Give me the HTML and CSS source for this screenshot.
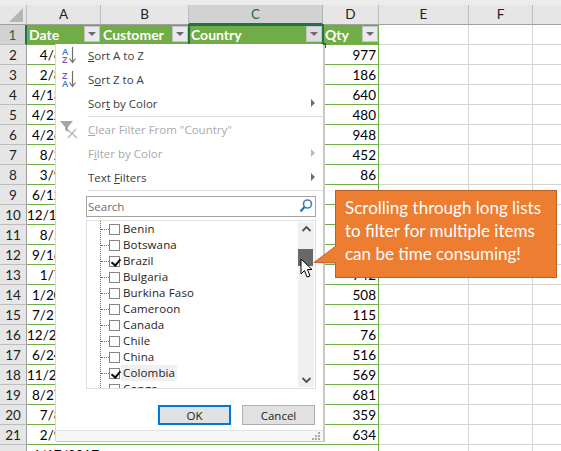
FILE: index.html
```html
<!DOCTYPE html>
<html lang="en">
<head>
<meta charset="utf-8">
<title>Filter list</title>
<link rel="stylesheet" href="styles.css">
</head>
<body>
<div class="app">
  <div class="topstrip"></div>
  <div class="sheet">
    <div class="corner"><svg width="27" height="19" viewBox="0 0 27 19"><path d="M23 3V17H9Z" fill="#b5b5b5"/></svg></div>
    <div class="ch">A</div><div class="ch">B</div><div class="ch sel">C</div><div class="ch">D</div><div class="ch">E</div><div class="ch">F</div><div class="ch end"></div>

    <div class="rh sel">1</div>
    <div class="th">Date<span class="fb"></span></div>
    <div class="th">Customer<span class="fb"></span></div>
    <div class="th active">Country<span class="fb"></span><i class="handle"></i></div>
    <div class="th">Qty<span class="fb"></span></div>
    <div class="c"></div><div class="c"></div><div class="c end"></div>

    <div class="rh">2</div><div class="d">4/6/2017</div><div class="d"></div><div class="d"></div><div class="d n">977</div><div class="c"></div><div class="c"></div><div class="c end"></div>
    <div class="rh">3</div><div class="d">2/8/2017</div><div class="d"></div><div class="d"></div><div class="d n">186</div><div class="c"></div><div class="c"></div><div class="c end"></div>
    <div class="rh">4</div><div class="d">4/13/2017</div><div class="d"></div><div class="d"></div><div class="d n">640</div><div class="c"></div><div class="c"></div><div class="c end"></div>
    <div class="rh">5</div><div class="d">4/22/2017</div><div class="d"></div><div class="d"></div><div class="d n">480</div><div class="c"></div><div class="c"></div><div class="c end"></div>
    <div class="rh">6</div><div class="d">4/26/2017</div><div class="d"></div><div class="d"></div><div class="d n">948</div><div class="c"></div><div class="c"></div><div class="c end"></div>
    <div class="rh">7</div><div class="d">8/2/2017</div><div class="d"></div><div class="d"></div><div class="d n">452</div><div class="c"></div><div class="c"></div><div class="c end"></div>
    <div class="rh">8</div><div class="d">3/9/2017</div><div class="d"></div><div class="d"></div><div class="d n">86</div><div class="c"></div><div class="c"></div><div class="c end"></div>
    <div class="rh">9</div><div class="d">6/12/2017</div><div class="d"></div><div class="d"></div><div class="d n"></div><div class="c"></div><div class="c"></div><div class="c end"></div>
    <div class="rh">10</div><div class="d">12/14/2017</div><div class="d"></div><div class="d"></div><div class="d n"></div><div class="c"></div><div class="c"></div><div class="c end"></div>
    <div class="rh">11</div><div class="d">8/5/2017</div><div class="d"></div><div class="d"></div><div class="d n"></div><div class="c"></div><div class="c"></div><div class="c end"></div>
    <div class="rh">12</div><div class="d">9/16/2017</div><div class="d"></div><div class="d"></div><div class="d n"></div><div class="c"></div><div class="c"></div><div class="c end"></div>
    <div class="rh">13</div><div class="d">1/7/2017</div><div class="d"></div><div class="d"></div><div class="d n">742</div><div class="c"></div><div class="c"></div><div class="c end"></div>
    <div class="rh">14</div><div class="d">1/20/2017</div><div class="d"></div><div class="d"></div><div class="d n">508</div><div class="c"></div><div class="c"></div><div class="c end"></div>
    <div class="rh">15</div><div class="d">7/21/2017</div><div class="d"></div><div class="d"></div><div class="d n">115</div><div class="c"></div><div class="c"></div><div class="c end"></div>
    <div class="rh">16</div><div class="d">12/23/2017</div><div class="d"></div><div class="d"></div><div class="d n">76</div><div class="c"></div><div class="c"></div><div class="c end"></div>
    <div class="rh">17</div><div class="d">6/24/2017</div><div class="d"></div><div class="d"></div><div class="d n">516</div><div class="c"></div><div class="c"></div><div class="c end"></div>
    <div class="rh">18</div><div class="d">11/25/2017</div><div class="d"></div><div class="d"></div><div class="d n">569</div><div class="c"></div><div class="c"></div><div class="c end"></div>
    <div class="rh">19</div><div class="d">8/27/2017</div><div class="d"></div><div class="d"></div><div class="d n">681</div><div class="c"></div><div class="c"></div><div class="c end"></div>
    <div class="rh">20</div><div class="d">7/8/2017</div><div class="d"></div><div class="d"></div><div class="d n">359</div><div class="c"></div><div class="c"></div><div class="c end"></div>
    <div class="rh">21</div><div class="d">2/9/2017</div><div class="d"></div><div class="d"></div><div class="d n">634</div><div class="c"></div><div class="c"></div><div class="c end"></div>
    <div class="rh"></div><div class="d">4/17/2017</div><div class="d"></div><div class="d"></div><div class="d n"></div><div class="c"></div><div class="c"></div><div class="c end"></div>
  </div>

  <div class="menu">
    <div class="item"><svg class="ico" width="24" height="20" viewBox="0 0 24 20"><text x="5" y="10" class="lt blue">A</text><text x="5" y="17.500" class="lt purple">Z</text><path d="M15.500 2V17M12.500 13.500L15.500 17.500L18.500 13.500" fill="none" stroke="#6d6d6d" stroke-width="1.200"/></svg><span><u>S</u>ort A to Z</span></div>
    <div class="item"><svg class="ico" width="24" height="20" viewBox="0 0 24 20"><text x="5" y="10" class="lt purple">Z</text><text x="5" y="17.500" class="lt blue">A</text><path d="M15.500 2V17M12.500 13.500L15.500 17.500L18.500 13.500" fill="none" stroke="#6d6d6d" stroke-width="1.200"/></svg><span>S<u>o</u>rt Z to A</span></div>
    <div class="item"><span class="noico">Sor<u>t</u> by Color</span><i class="arrow"></i></div>
    <div class="sep"></div>
    <div class="item off"><svg class="ico" width="24" height="20" viewBox="0 0 24 20"><path d="M3 2H16L11 8V13L8 11V8Z" fill="#a6a6a6"/><path d="M10 10L20 19M19 10L11 19" stroke="#b8b8b8" stroke-width="1.400"/></svg><span><u>C</u>lear Filter From "Country"</span></div>
    <div class="item off"><span class="noico">F<u>i</u>lter by Color</span><i class="arrow"></i></div>
    <div class="item"><span class="noico">Text <u>F</u>ilters</span><i class="arrow"></i></div>
    <div class="sep"></div>
    <div class="search"><span>Search</span><svg width="16" height="16" viewBox="0 0 16 16"><circle cx="9.500" cy="6" r="4" fill="none" stroke="#3f7fbf" stroke-width="1.600"/><path d="M6.500 9L2.500 13.500" stroke="#2a6fb0" stroke-width="2.200"/></svg></div>
    <div class="list">
      <div class="tree">
        <div class="li"><i class="cb"></i><span>Benin</span></div>
        <div class="li"><i class="cb"></i><span>Botswana</span></div>
        <div class="li"><i class="cb on"></i><span>Brazil</span></div>
        <div class="li"><i class="cb"></i><span>Bulgaria</span></div>
        <div class="li"><i class="cb"></i><span>Burkina Faso</span></div>
        <div class="li"><i class="cb"></i><span>Cameroon</span></div>
        <div class="li"><i class="cb"></i><span>Canada</span></div>
        <div class="li"><i class="cb"></i><span>Chile</span></div>
        <div class="li"><i class="cb"></i><span>China</span></div>
        <div class="li"><i class="cb on"></i><span class="hl">Colombia</span></div>
        <div class="li"><i class="cb"></i><span>Congo</span></div>
      </div>
      <div class="scroll">
        <svg width="15" height="14" viewBox="0 0 15 14"><path d="M3.500 9L7.500 5L11.500 9" fill="none" stroke="#505050" stroke-width="1.800"/></svg>
        <div class="thumb"></div>
        <svg width="15" height="14" viewBox="0 0 15 14"><path d="M3.500 5L7.500 9L11.500 5" fill="none" stroke="#505050" stroke-width="1.800"/></svg>
      </div>
    </div>
    <div class="btns"><button class="btn ok">OK</button><button class="btn">Cancel</button></div>
    <div class="grip"><svg width="10" height="10" viewBox="0 0 10 10"><path d="M7 1h2v2H7zM4 4h2v2H4zM7 4h2v2H7zM1 7h2v2H1zM4 7h2v2H4zM7 7h2v2H7z" fill="#a8a8a8"/></svg></div>
  </div>

  <div class="callout">
    <svg class="tail" width="24" height="20" viewBox="0 0 24 20"><path d="M23 1L1 17.500L23 18Z" fill="#ed7d31"/><path d="M23 1L1 17.500L23 18" fill="none" stroke="#b8622a"/></svg>
    <p>Scrolling through long lists<br>to filter for multiple items<br>can be time consuming!</p>
  </div>
  <svg class="cursor" width="13" height="21" viewBox="0 0 13 21"><path d="M1 1V16L4.500 12.500L7 19L10 18L7.500 11.500H12Z" fill="#fff" stroke="#000" stroke-width="1"/></svg>
</div>
</body>
</html>
```
FILE: styles.css
```css
* { box-sizing: border-box; }
html, body { margin: 0; padding: 0; }
body { width: 561px; height: 451px; overflow: hidden; background: #fff; }
.app { position: relative; width: 561px; height: 451px; overflow: hidden; font-family: "Lato", "Liberation Sans", sans-serif; }
.topstrip { height: 5px; background: #ececec; }
.sheet {
  display: grid;
  grid-template-columns: 27px 74px 88px 134px 56px 90px 64px 28px;
  grid-template-rows: 20px repeat(22, 20px);
  font-size: 13.500px;
  color: #000;
}
.corner { background: #e6e6e6; border-right: 1px solid #bdbdbd; border-bottom: 1px solid #a0a0a0; }
.corner svg { display: block; }
.ch { background: #e6e6e6; border-right: 1px solid #bdbdbd; border-bottom: 1px solid #a0a0a0; display: flex; align-items: center; justify-content: center; color: #222; line-height: 19px; }
.ch.sel { background: #d2d2d2; color: #1f6b43; border-bottom: 2px solid #217346; border-right-color: #b0b0b0; }
.ch.end { border-right: 0; }
.rh { background: #e6e6e6; border-right: 1px solid #9f9f9f; border-bottom: 1px solid #bdbdbd; display: flex; align-items: center; justify-content: center; color: #222; }
.rh.sel { background: #d2d2d2; color: #1f6b43; border-right: 2px solid #217346; }
.th { position: relative; background: #70ad47; color: #fff; font-weight: 700; padding-left: 2px; display: flex; align-items: center; border-bottom: 1px solid #70ad47; font-size: 14px; }
.fb { position: absolute; right: 1px; top: 1px; width: 16px; height: 16px; background: #e9e9f0; border: 1px solid #c4c4c4; }
.fb::after { content: ""; position: absolute; left: 3px; top: 5px; border: 4px solid transparent; border-top: 4px solid #6b6b6b; border-bottom: 0; }
.th.active { outline: 2px solid #217346; outline-offset: -1px; z-index: 1; }
.th.active .fb { background: #dcdce2; }
.handle { position: absolute; right: -3px; bottom: -4px; width: 5px; height: 5px; background: #217346; }
.d { border-bottom: 1px solid #70ad47; text-align: right; padding-right: 2px; line-height: 20px; }
.d.n { border-right: 1px solid #70ad47; }
.c { border-right: 1px solid #d4d4d4; border-bottom: 1px solid #d4d4d4; }
.c.end { border-right: 0; }

.menu {
  position: absolute; left: 56px; top: 44px; width: 267px; height: 397px;
  background: #fff; box-shadow: 2px 1px 0 #c8c8c8, -1px 0 0 #d8d8d8, 0 1px 0 #c8c8c8;
  display: flex; flex-direction: column; z-index: 3;
  font-family: "Open Sans", "Liberation Sans", sans-serif; font-size: 11.500px; color: #3c3c3c;
}
.item { position: relative; height: 24px; padding-bottom: 2px; display: flex; align-items: center; flex: none; }
.item.off { color: #a9a9a9; }
.item .ico { width: 24px; height: 20px; margin-left: 1px; margin-right: 7px; flex: none; }
.noico { margin-left: 32px; }
.lt { font-family: "Open Sans", sans-serif; font-size: 9.500px; font-weight: 600; }
.blue { fill: #3a7fc4; }
.purple { fill: #7a4fa8; }
.arrow { position: absolute; right: 8px; top: 7px; border-left: 4px solid #6f6f6f; border-top: 4px solid transparent; border-bottom: 4px solid transparent; }
.item.off .arrow { border-left-color: #b8b8b8; }
.sep { height: 1px; background: #dcdcdc; margin: 0 0 0 32px; flex: none; }
.sep + .item { margin-top: 1px; }
.search { margin: 5px 7px 0 30px; height: 21px; border: 1px solid #a3a3a3; display: flex; align-items: center; justify-content: space-between; padding: 0 0 1px 1px; color: #6e6e6e; flex: none; }
.search svg { flex: none; margin-right: 1px; }
.list { margin: 3px 7px 0 30px; height: 169px; border: 1px solid #dfdfdf; display: flex; overflow: hidden; flex: none; }
.tree { flex: 1; padding: 0 0 0 22px; color: #1c1c1c; position: relative; background-image: linear-gradient(#777 50%, transparent 50%); background-size: 1px 2px; background-repeat: repeat-y; background-position: 13px 0; }
.li { height: 16px; display: flex; align-items: center; position: relative; }
.li::before { content: ""; position: absolute; left: -8px; top: 8px; width: 8px; border-top: 1px dotted #777; }
.cb { width: 11px; height: 11px; border: 1px solid #858585; background: #fff; flex: none; margin-right: 1px; position: relative; }
.cb.on::after { content: ""; position: absolute; left: 3px; top: 0; width: 4px; height: 7px; border: solid #111; border-width: 0 2px 2px 0; transform: rotate(40deg); }
.li span { padding: 0 2px; line-height: 16px; height: 16px; letter-spacing: .15px; }
.hl { background: #f0f0f0; }
.scroll { width: 16px; margin: 1px 1px 1px 0; background: #f0f0f0; display: flex; flex-direction: column; align-items: center; position: relative; flex: none; justify-content: space-between; }
.thumb { position: absolute; left: 0; top: 27px; width: 15px; height: 17px; background: #686868; }
.btns { display: flex; justify-content: flex-end; gap: 11px; margin: 16px 8px 0 0; flex: none; }
.btn { width: 73px; height: 20px; background: #e1e1e1; border: 1px solid #adadad; font: inherit; color: #222; padding: 0; }
.btn.ok { border: 2px solid #0078d7; }
.grip { margin-top: auto; height: 11px; border-top: 1px solid #e3e3e3; background: #f4f6f8; display: flex; justify-content: flex-end; align-items: flex-end; padding-right: 2px; flex: none; }

.callout { position: absolute; left: 335px; top: 190px; width: 222px; height: 88px; background: #ed7d31; border: 1px solid #b8622a; z-index: 4; }
.callout p { margin: 0; padding: 5px 0 0 9px; color: #fff; font-size: 17px; line-height: 23px; white-space: nowrap; }
.tail { position: absolute; left: -23px; top: 54px; }
.cursor { position: absolute; left: 300px; top: 258px; z-index: 5; }
```
